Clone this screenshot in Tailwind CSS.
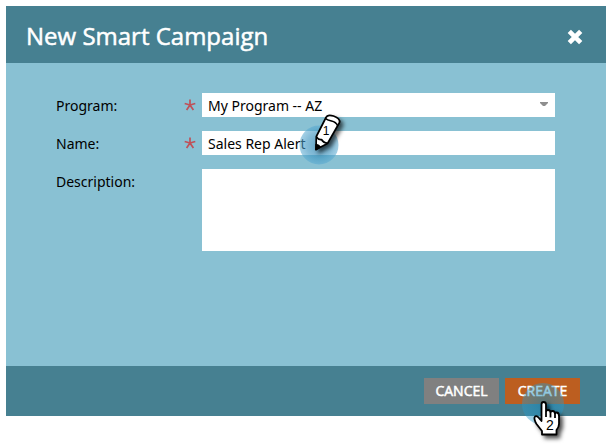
<!DOCTYPE html>
<html lang="en">
<head>
<meta charset="utf-8">
<meta name="viewport" content="width=device-width, initial-scale=1">
<title>New Smart Campaign</title>
<script src="https://cdn.jsdelivr.net/npm/@tailwindcss/browser@4"></script>
</head>
<body class="min-h-screen bg-white pt-1.5 pl-1.5 pr-[5px] font-['Noto_Sans','Open_Sans',sans-serif] text-sm text-black">
<main role="dialog" aria-labelledby="title" class="bg-[#89c1d3]">
  <header class="flex h-[57px] items-center justify-between bg-[#468091] pl-5 pr-[23px] text-white">
    <h1 id="title" class="pt-0.5 font-['Open_Sans',sans-serif] text-2xl font-normal [-webkit-text-stroke:0.5px_white]">New Smart Campaign</h1>
    <button type="button" aria-label="Close" class="pt-1">
      <svg class="size-4" viewBox="0 0 16 16" stroke="white" stroke-width="4.6"><path d="M2.3 2.3 13.7 13.7M13.7 2.3 2.3 13.7"/></svg>
    </button>
  </header>

  <form id="campaign" class="flex min-h-[303px] flex-col gap-3.5 pt-[30px] pr-[51px] pb-8 pl-[50px]">
    <div class="flex items-center">
      <label for="program" class="w-32 shrink-0 pt-0.5">Program:</label>
      <svg class="mr-1.5 size-3 shrink-0" viewBox="0 0 12 12" fill="none" stroke="#bf5158" stroke-width="1.7" aria-hidden="true"><path d="M6 6V.5M6 6 .7 4.5M6 6l5.3-1.5M6 6l-3.4 5M6 6l3.4 5"/></svg>
      <div class="relative min-w-0 flex-1">
        <select id="program" required class="block h-6 w-full appearance-none rounded-none bg-white px-1.5 pt-0.5 outline-none"><option>My Program -- AZ</option></select>
        <svg class="pointer-events-none absolute top-[9px] right-[7px] h-1 w-2" viewBox="0 0 8 4" fill="#8f8f8f" aria-hidden="true"><path d="M0 0h8v1L5 4H3L0 1z"/></svg>
      </div>
    </div>

    <div class="flex items-center">
      <label for="name" class="w-32 shrink-0 pt-0.5">Name:</label>
      <svg class="mr-1.5 size-3 shrink-0" viewBox="0 0 12 12" fill="none" stroke="#bf5158" stroke-width="1.7" aria-hidden="true"><path d="M6 6V.5M6 6 .7 4.5M6 6l5.3-1.5M6 6l-3.4 5M6 6l3.4 5"/></svg>
      <div class="relative min-w-0 flex-1">
        <input id="name" type="text" required value="Sales Rep Alert" class="block h-6 w-full rounded-none bg-white px-1.5 outline-none">
        <svg class="pointer-events-none absolute -top-6 left-[90px] h-[64px] w-[60px]" viewBox="0 0 60 64" aria-hidden="true">
          <defs>
            <radialGradient id="glow1"><stop offset="0" stop-color="#2d86b3" stop-opacity=".75"/><stop offset=".65" stop-color="#3c94c0" stop-opacity=".62"/><stop offset="1" stop-color="#58a9d1" stop-opacity=".55"/></radialGradient>
            <filter id="shadow1" x="-50%" y="-50%" width="200%" height="200%"><feDropShadow dx="3" dy="3" stdDeviation="2.2" flood-color="#000" flood-opacity=".65"/></filter>
          </defs>
          <circle cx="27" cy="38" r="19.5" fill="url(#glow1)"/>
          <g filter="url(#shadow1)" stroke="#000" stroke-width="1.7" stroke-linejoin="round">
            <path d="M24 42.500 24.300 29.500 34 10.500Q35.500 7 41.500 9 48.500 11.500 47.500 15.500L35.500 36.500Z" fill="#fff"/>
            <path d="M24 42.500 24.200 37.500Q27 38 28 40Z" fill="#000"/>
            <path d="M24.500 30Q26.500 33 29.500 32.500 31.500 36 35.500 36M33.500 11.500Q35 13 39.500 14 44 15 45.500 18.500" fill="none"/>
          </g>
          <text x="34" y="28" text-anchor="middle" font-size="12" class="font-['Liberation_Sans',sans-serif]">1</text>
        </svg>
      </div>
    </div>

    <div class="flex items-start">
      <label for="description" class="w-[146px] shrink-0 pt-[3px]">Description:</label>
      <textarea id="description" class="block h-[82px] min-w-0 flex-1 resize-none rounded-none bg-white px-1.5 py-0.5 outline-none"></textarea>
    </div>
  </form>

  <footer class="flex h-[50px] items-center justify-end gap-1.5 bg-[#468091] pr-[26px] font-['Open_Sans',sans-serif] text-white">
    <button type="button" class="h-[26px] w-[75px] bg-[#808080] [-webkit-text-stroke:0.5px_white]">CANCEL</button>
    <div class="relative">
      <button type="submit" form="campaign" class="block h-[26px] w-[75px] bg-[#bc5e20] [-webkit-text-stroke:0.5px_white]">CREATE</button>
      <svg class="pointer-events-none absolute top-0 left-[10px] h-[68px] w-[60px]" viewBox="0 0 60 68" aria-hidden="true">
        <defs>
          <radialGradient id="glow2"><stop offset="0" stop-color="#1685b5" stop-opacity=".6"/><stop offset="1" stop-color="#289acb" stop-opacity=".42"/></radialGradient>
          <filter id="shadow2" x="-50%" y="-50%" width="200%" height="200%"><feDropShadow dx="3" dy="3" stdDeviation="2.2" flood-color="#000" flood-opacity=".7"/></filter>
        </defs>
        <circle cx="28" cy="26" r="21" fill="url(#glow2)"/>
        <path filter="url(#shadow2)" d="M26.500 43V26.500Q26.500 24 28.500 24 31 24 31 26.500V34Q31 32 33 32 35.500 32 35.500 35 35.500 33 37.500 33 40 33 40 36 40 34.500 41.500 34.500 44 34.500 44 38V46Q44 49 41.500 52V56.500H27V53L21.500 46Q19 41.500 19.500 39.500 20.500 37 23 39ZM31 34V39M35.500 35V39.500M40 36V40" fill="#fff" stroke="#000" stroke-width="1.8" stroke-linejoin="round"/>
        <text x="35" y="52" text-anchor="middle" font-size="14" class="font-['Liberation_Sans',sans-serif]">2</text>
      </svg>
    </div>
  </footer>
</main>
</body>
</html>
